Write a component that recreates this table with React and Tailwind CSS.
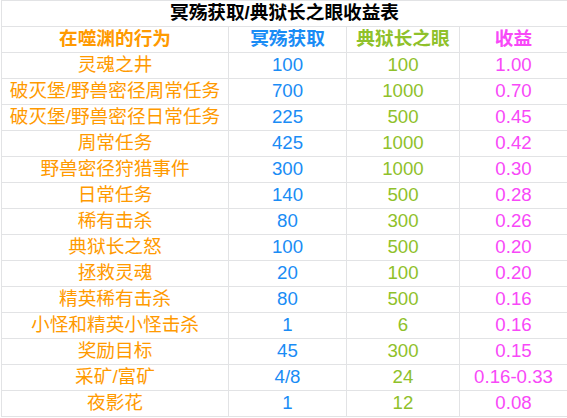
import React from "react";

const rows = [
  ["灵魂之井", "100", "100", "1.00"],
  ["破灭堡/野兽密径周常任务", "700", "1000", "0.70"],
  ["破灭堡/野兽密径日常任务", "225", "500", "0.45"],
  ["周常任务", "425", "1000", "0.42"],
  ["野兽密径狩猎事件", "300", "1000", "0.30"],
  ["日常任务", "140", "500", "0.28"],
  ["稀有击杀", "80", "300", "0.26"],
  ["典狱长之怒", "100", "500", "0.20"],
  ["拯救灵魂", "20", "100", "0.20"],
  ["精英稀有击杀", "80", "500", "0.16"],
  ["小怪和精英小怪击杀", "1", "6", "0.16"],
  ["奖励目标", "45", "300", "0.15"],
  ["采矿/富矿", "4/8", "24", "0.16-0.33"],
  ["夜影花", "1", "12", "0.08"],
];

const font = { fontFamily: '"Liberation Sans", "Noto Sans CJK SC", sans-serif' };

const Row = ({ cells, bold }) => (
  <div className="grid grid-cols-[227px_118px_113px_108px] h-[26px] border-t border-[#e2e3e5]">
    <div className={`border-l border-[#e2e3e5] flex items-center justify-center text-[#ff9a00] ${bold ? "font-bold" : ""}`}>
      {cells[0]}
    </div>
    <div className={`border-l border-[#e2e3e5] flex items-center justify-center text-[#1a8cf5] ${bold ? "font-bold" : ""}`}>
      {cells[1]}
    </div>
    <div className={`border-l border-[#e2e3e5] flex items-center justify-center text-[#8fc12a] ${bold ? "font-bold" : ""}`}>
      {cells[2]}
    </div>
    <div className={`border-l border-[#e2e3e5] flex items-center justify-center text-[#f848f8] ${bold ? "font-bold" : ""}`}>
      {cells[3]}
    </div>
  </div>
);

export default function App() {
  return (
    <div className="w-[567px] h-[418px] bg-white overflow-hidden pl-px text-[18.67px] leading-none" style={font}>
      <div className="h-[26px] border-t border-l border-[#e2e3e5] flex items-center justify-center font-bold text-black">
        冥殇获取/典狱长之眼收益表
      </div>
      <Row cells={["在噬渊的行为", "冥殇获取", "典狱长之眼", "收益"]} bold />
      {rows.map((r) => (
        <Row key={r[0]} cells={r} />
      ))}
      <div className="border-t border-[#e2e3e5]" />
    </div>
  );
}
